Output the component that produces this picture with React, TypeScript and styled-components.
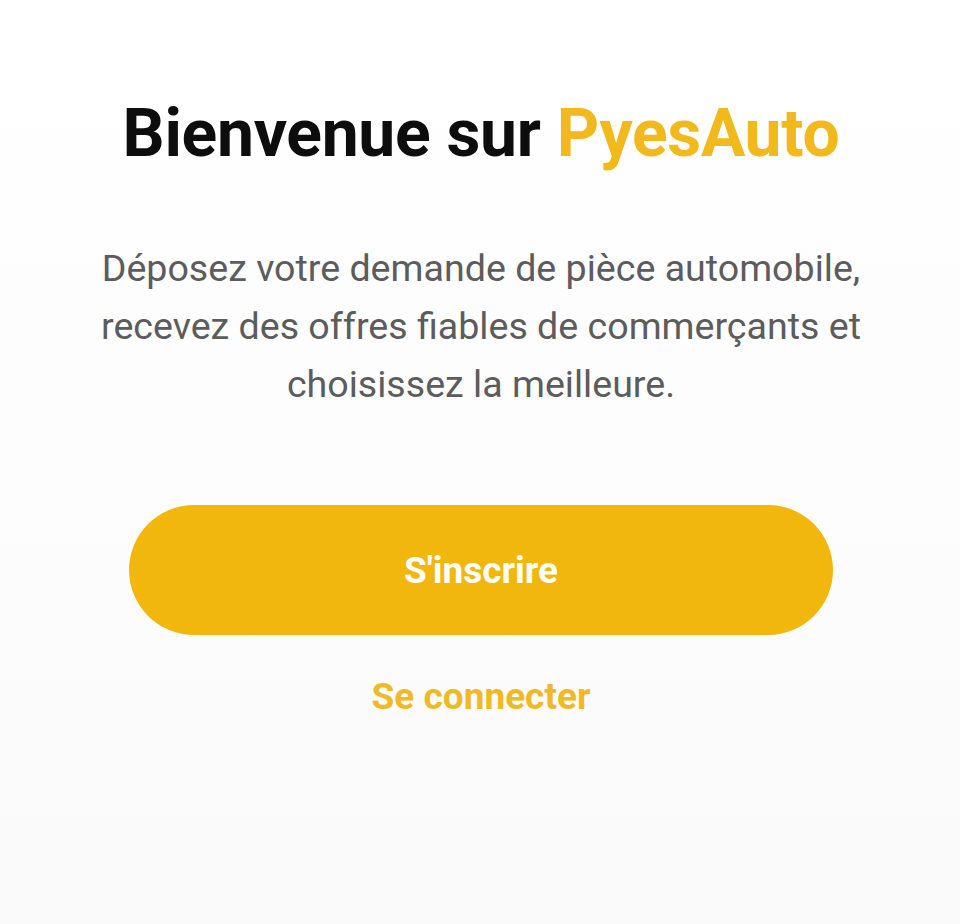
import styled, { createGlobalStyle } from 'styled-components';

const GlobalStyle = createGlobalStyle`
  html, body {
    margin: 0;
    padding: 0;
  }
  body {
    font-family: Roboto, "Liberation Sans", sans-serif;
    background: #fbfbfb;
  }
`;

const Screen = styled.main`
  min-height: 924px;
  box-sizing: border-box;
  display: flex;
  flex-direction: column;
  align-items: center;
  padding: 96px 0 0 2px;
  background: linear-gradient(to bottom, #ffffff 0%, #fafafa 100%);
`;

const Title = styled.h1`
  margin: 0;
  font-size: 66px;
  font-weight: 700;
  line-height: 76px;
  color: #0d0d0d;
  letter-spacing: -0.3px;
`;

const Brand = styled.span`
  color: #f2b91c;
`;

const Intro = styled.p`
  margin: 67px 0 0;
  width: 820px;
  text-align: center;
  font-size: 37.6px;
  line-height: 58px;
  font-weight: 400;
  color: #5c5c5c;
`;

const Actions = styled.div`
  margin-top: 92px;
  display: flex;
  flex-direction: column;
  align-items: center;
  gap: 38px;
`;

const PrimaryButton = styled.button`
  width: 704px;
  height: 130px;
  border: none;
  border-radius: 65px;
  background: #f2b70c;
  color: #ffffff;
  font-family: inherit;
  font-size: 37px;
  font-weight: 700;
  cursor: pointer;
`;

const TextButton = styled.button`
  border: none;
  background: none;
  padding: 0;
  color: #f0b926;
  font-family: inherit;
  font-size: 37px;
  font-weight: 700;
  line-height: 48px;
  cursor: pointer;
`;

const App = () => (
  <>
    <GlobalStyle />
    <Screen>
      <Title>
        Bienvenue sur <Brand>PyesAuto</Brand>
      </Title>
      <Intro>
        Déposez votre demande de pièce automobile, recevez des offres fiables de
        commerçants et choisissez la meilleure.
      </Intro>
      <Actions>
        <PrimaryButton>S'inscrire</PrimaryButton>
        <TextButton>Se connecter</TextButton>
      </Actions>
    </Screen>
  </>
);

export default App;
